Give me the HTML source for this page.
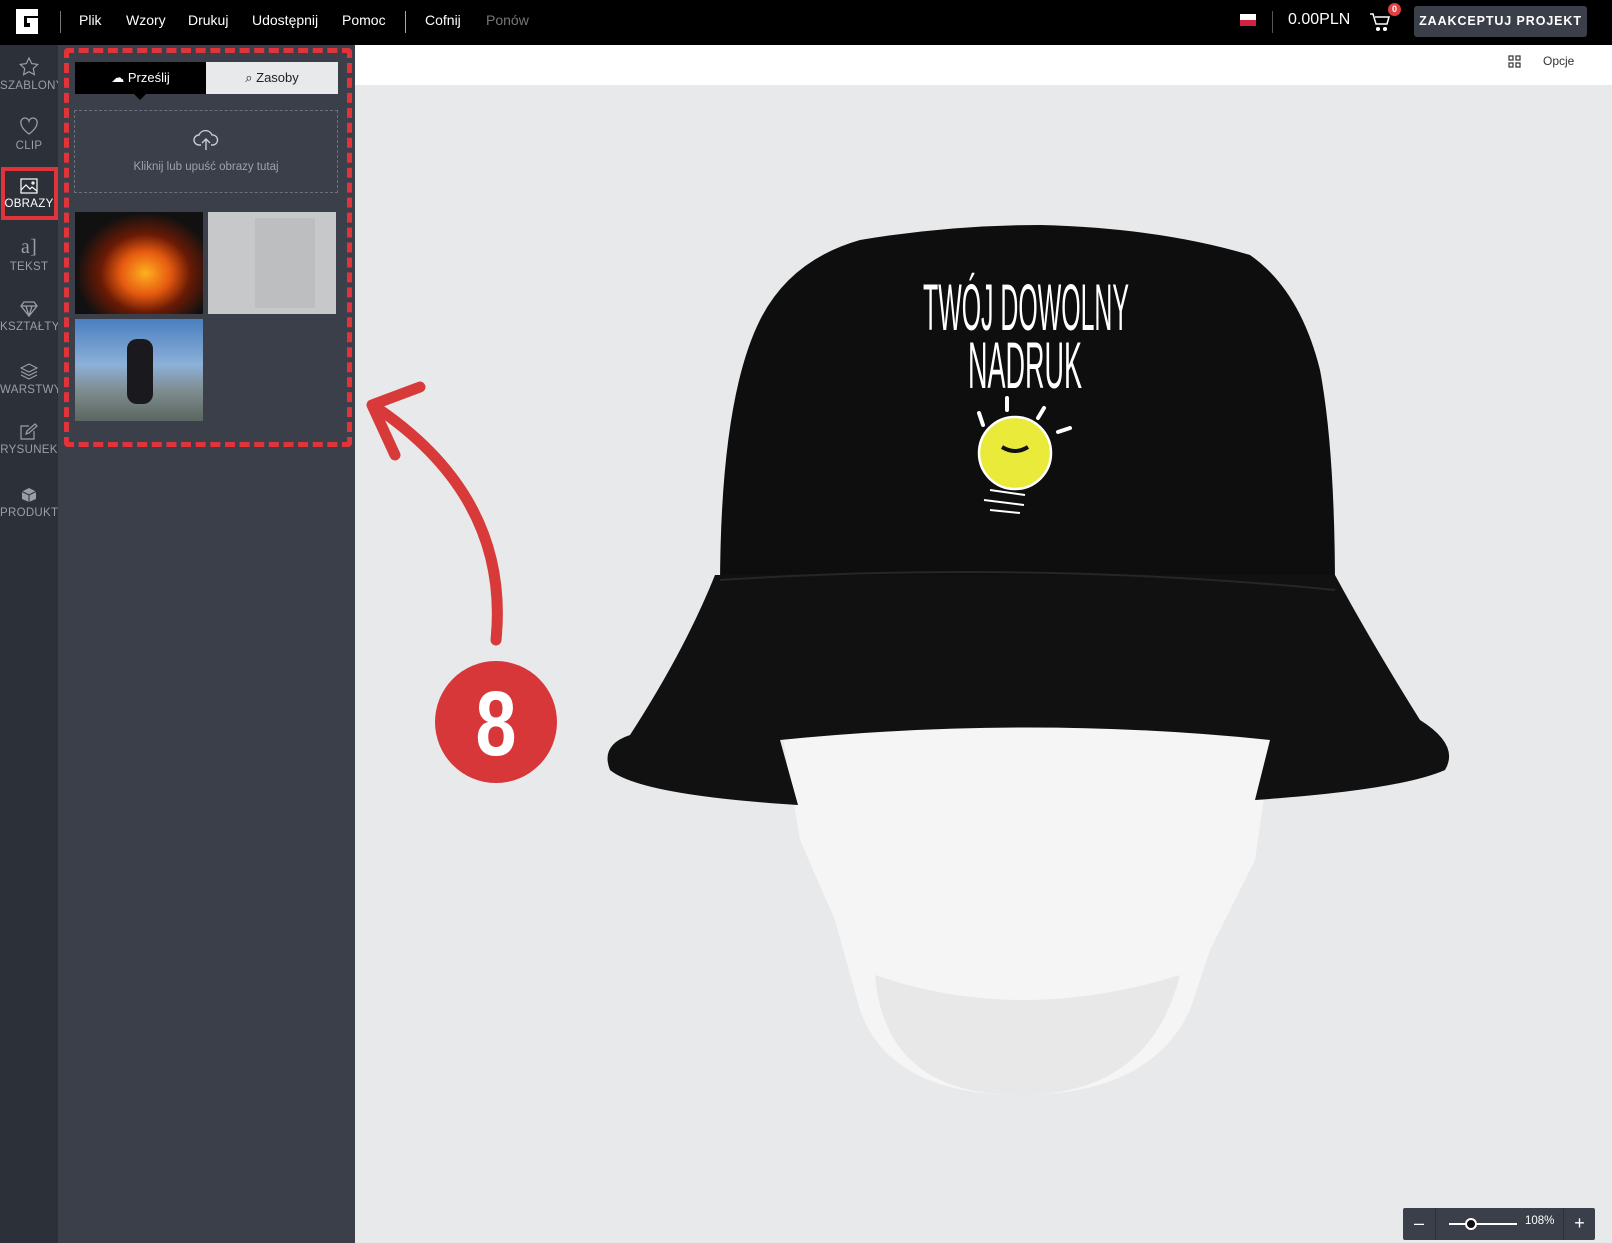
<!DOCTYPE html>
<html><head><meta charset="utf-8"><style>
*{margin:0;padding:0;box-sizing:border-box}
body{width:1612px;height:1243px;overflow:hidden;background:#e8e9eb;font-family:"Liberation Sans",sans-serif;position:relative}
.abs{position:absolute}
#top{left:0;top:0;width:1612px;height:45px;background:#000;color:#fff}
#top .m{position:absolute;top:12px;font-size:14px}
#side{left:0;top:45px;width:58px;height:1198px;background:#2c3038}
#panel{left:58px;top:45px;width:297px;height:1198px;background:#3a3f4a}
.si{position:absolute;left:0;width:58px;text-align:center;color:#9a9ea6;font-size:11.5px;letter-spacing:.3px;white-space:nowrap;overflow:hidden}
.si svg{display:block;margin:0 auto 4px}
</style></head><body>
<div id="top" class="abs">
  <svg class="abs" style="left:14px;top:9px" width="24" height="25" viewBox="0 0 24 25"><path d="M2 0h22v7H10v11h6v-4h-3V9h11v16H2z" fill="#fff"/></svg>
  <div class="abs" style="left:60px;top:11px;width:1px;height:22px;background:#777"></div>
  <span class="m" style="left:79px">Plik</span>
  <span class="m" style="left:126px">Wzory</span>
  <span class="m" style="left:188px">Drukuj</span>
  <span class="m" style="left:252px">Udostępnij</span>
  <span class="m" style="left:342px">Pomoc</span>
  <div class="abs" style="left:405px;top:11px;width:1px;height:22px;background:#aaa"></div>
  <span class="m" style="left:425px">Cofnij</span>
  <span class="m" style="left:486px;color:#777">Ponów</span>
  <div class="abs" style="left:1240px;top:14px;width:16px;height:6px;background:#fff"></div>
  <div class="abs" style="left:1240px;top:20px;width:16px;height:6px;background:#d4213d"></div>
  <div class="abs" style="left:1272px;top:11px;width:1px;height:22px;background:#555"></div>
  <span class="m" style="left:1288px;font-size:16px;top:11px">0.00PLN</span>
  <svg class="abs" style="left:1369px;top:12px" width="22" height="20" viewBox="0 0 22 20" fill="none" stroke="#fff" stroke-width="1.5"><path d="M1 2h3l3 10h11l2-7H6"/><circle cx="9" cy="17" r="1.3" fill="#fff"/><circle cx="16" cy="17" r="1.3" fill="#fff"/></svg>
  <div class="abs" style="left:1388px;top:3px;width:13px;height:13px;border-radius:50%;background:#e04040;color:#fff;font-size:9px;text-align:center;line-height:13px;font-weight:bold">0</div>
  <div class="abs" style="left:1414px;top:6px;width:173px;height:31px;background:#3a3f4a;border-radius:3px;color:#fff;font-weight:bold;font-size:12.5px;letter-spacing:.9px;text-align:center;line-height:31px">ZAAKCEPTUJ PROJEKT</div>
</div>
<div id="side" class="abs">
  <div class="si" style="top:12px"><svg width="20" height="19" viewBox="0 0 20 19" fill="none" stroke="#9a9ea6" stroke-width="1.2"><path d="M10 1l2.7 5.6 6 .8-4.4 4.2 1.1 6L10 14.7l-5.4 2.9 1.1-6L1.3 7.4l6-.8z"/></svg>SZABLONY</div>
  <div class="si" style="top:72px"><svg width="20" height="19" viewBox="0 0 20 19" fill="none" stroke="#9a9ea6" stroke-width="1.3"><path d="M10 17S2 11.5 2 6.3A4 4 0 0 1 10 4a4 4 0 0 1 8 2.3C18 11.5 10 17 10 17z"/></svg>CLIP</div>
  <div class="abs" style="left:1px;top:122px;width:57px;height:53px;border:4px solid #e0333a;background:#2c3038"></div>
  <div class="si" style="top:133px;color:#fff"><svg width="18" height="16" viewBox="0 0 18 16" fill="none" stroke="#fff" stroke-width="1.2"><rect x="1" y="1" width="16" height="14"/><path d="M1 12l5-5 4 4 2-2 5 4"/><circle cx="13" cy="5" r="1"/></svg>OBRAZY</div>
  <div class="si" style="top:192px"><div style="font-family:'Liberation Serif',serif;font-size:20px;height:24px;line-height:20px">a]</div>TEKST</div>
  <div class="si" style="top:256px"><svg width="18" height="16" viewBox="0 0 18 16" fill="none" stroke="#9a9ea6" stroke-width="1.3"><path d="M4 1h10l3 4-8 10L1 5zM1 5h16M6 5l3 10 3-10"/></svg>KSZTAŁTY</div>
  <div class="si" style="top:318px"><svg width="18" height="17" viewBox="0 0 18 17" fill="none" stroke="#9a9ea6" stroke-width="1.2"><path d="M9 1l8 4-8 4-8-4zM1 8.5l8 4 8-4M1 12l8 4 8-4"/></svg>WARSTWY</div>
  <div class="si" style="top:378px"><svg width="18" height="17" viewBox="0 0 18 17" fill="none" stroke="#9a9ea6" stroke-width="1.2"><path d="M9 3H1v13h13V8M6 11l1-3 8-7 2 2-8 7z"/></svg>RYSUNEK</div>
  <div class="si" style="top:442px"><svg width="16" height="16" viewBox="0 0 16 16"><path d="M8 1l7 3.5v7.5L8 15 1 12V4.5z" fill="#9a9ea6"/><path d="M1 4.5L8 8l7-3.5M8 8v7" stroke="#2c3038" stroke-width="1" fill="none"/></svg>PRODUKT</div>
</div>
<div id="panel" class="abs"></div>
<div class="abs" style="left:75px;top:62px;width:131px;height:32px;background:#000;color:#fff;font-size:13px;text-align:center;line-height:32px">☁ Prześlij</div>
<div class="abs" style="left:134px;top:94px;width:0;height:0;border-left:6px solid transparent;border-right:6px solid transparent;border-top:6px solid #000"></div>
<div class="abs" style="left:206px;top:62px;width:132px;height:32px;background:#e8e9eb;color:#222;font-size:13px;text-align:center;line-height:32px">⌕ Zasoby</div>
<div class="abs" style="left:74px;top:110px;width:264px;height:83px;border:1px dashed #6a707c"></div>
<svg class="abs" style="left:193px;top:128px" width="26" height="24" viewBox="0 0 26 24" fill="none" stroke="#c8ccd2" stroke-width="1.4"><path d="M8 17H6a5 5 0 0 1 0-10 7 7 0 0 1 13 0 5 5 0 0 1 1 10h-2M13 22V11M9 15l4-4 4 4"/></svg>
<div class="abs" style="left:74px;top:161px;width:264px;text-align:center;color:#9da1a9;font-size:11.5px">Kliknij lub upuść obrazy tutaj</div>
<div class="abs" style="left:75px;top:212px;width:128px;height:102px;background:radial-gradient(ellipse at 55% 60%,#ffb020 0,#e65a10 25%,#6a1a05 45%,#111 70%)"></div>
<div class="abs" style="left:208px;top:212px;width:128px;height:102px;background:#c7c8ca"><div style="position:absolute;left:47px;top:6px;width:60px;height:90px;background:#bdbec0"></div></div>
<div class="abs" style="left:75px;top:319px;width:128px;height:102px;background:linear-gradient(#4a7fc0 0,#8cb0d8 45%,#7f8d90 70%,#5a6660 100%)"><div style="position:absolute;left:52px;top:20px;width:26px;height:65px;background:#1a1a1e;border-radius:10px"></div></div>
<div class="abs" style="left:64px;top:48px;width:288px;height:399px;border:5px dashed #e0333a;border-radius:4px"></div>
<div class="abs" style="left:355px;top:45px;width:1257px;height:40px;background:#fff"></div>
<svg class="abs" style="left:1508px;top:55px" width="13" height="13" viewBox="0 0 13 13" fill="none" stroke="#333" stroke-width="1.2"><rect x="1" y="1" width="4" height="4"/><rect x="8" y="1" width="4" height="4"/><rect x="1" y="8" width="4" height="4"/><path d="M8 8h4v4H8z"/></svg>
<div class="abs" style="left:1543px;top:54px;font-size:12px;color:#333">Opcje</div>
<svg class="abs" style="left:355px;top:85px" width="1257" height="1158" viewBox="355 85 1257 1158">
  <path d="M780 720 L1275 720 L1255 860 L1210 950 L1190 1010 Q1150 1095 1020 1095 Q890 1095 860 1010 L835 920 L800 840 Z" fill="#f5f5f5"/>
  <path d="M875 975 Q1020 1025 1180 975 Q1150 1095 1020 1095 Q885 1095 875 975Z" fill="#e8e8e8"/>
  <path d="M720 590 Q720 400 760 320 Q790 260 860 240 Q950 225 1040 225 Q1160 228 1250 255 Q1300 290 1320 370 Q1335 450 1335 590 Z" fill="#0e0e0e"/>
  <path d="M715 575 L1335 575 Q1370 640 1420 720 Q1460 745 1445 770 Q1400 790 1255 800 L1270 740 Q1030 715 780 740 L798 805 Q640 795 610 770 Q600 745 630 735 Q685 650 715 575Z" fill="#111"/>
  <path d="M720 580 Q1030 560 1335 590" stroke="#262626" stroke-width="2" fill="none"/>
  <g fill="none" stroke="#fff" stroke-width="3.5">
    <circle cx="1015" cy="453" r="36" fill="#e9ea3a" stroke="#fff" stroke-width="2.5"/>
    <path d="M1002 447 q13 8 26 0" stroke="#111" stroke-width="4"/>
    <path d="M990 490 l35 5 M984 500 l40 5 M990 510 l30 3" stroke-width="2"/>
    <path d="M983 425 l-4 -12 M1007 410 l0 -12 M1038 418 l6 -10 M1058 432 l12 -4" stroke-width="4" stroke-linecap="round"/>
  </g>
  <text x="923" y="330" fill="#fff" font-family="Liberation Sans,sans-serif" font-size="66" textLength="206" lengthAdjust="spacingAndGlyphs">TWÓJ DOWOLNY</text>
  <text x="968" y="388" fill="#fff" font-family="Liberation Sans,sans-serif" font-size="66" textLength="114" lengthAdjust="spacingAndGlyphs">NADRUK</text>
  <path d="M496 640 Q510 500 380 410" stroke="#d83a3a" stroke-width="11" fill="none" stroke-linecap="round"/>
  <path d="M372 405 L420 387 M372 405 L395 455" stroke="#d83a3a" stroke-width="11" fill="none" stroke-linecap="round"/>
  <circle cx="496" cy="722" r="61" fill="#d8373a"/>
  <text x="496" y="755" text-anchor="middle" fill="#fff" font-family="Liberation Sans" font-weight="bold" font-size="92" transform="translate(496 0) scale(0.8 1) translate(-496 0)">8</text>
</svg>
<div class="abs" style="left:1403px;top:1208px;width:192px;height:32px;background:#3a3f4a;border-radius:2px;color:#fff">
  <div class="abs" style="left:0;top:0;width:33px;height:32px;text-align:center;line-height:30px;font-size:18px;border-right:1px solid #2c3038">–</div>
  <div class="abs" style="left:46px;top:15px;width:68px;height:2px;background:#fff"></div>
  <div class="abs" style="left:62px;top:10px;width:12px;height:12px;border-radius:50%;background:#111;border:2px solid #fff"></div>
  <div class="abs" style="left:122px;top:7px;font-size:11.5px">108%</div>
  <div class="abs" style="left:160px;top:0;width:32px;height:32px;text-align:center;line-height:30px;font-size:18px;border-left:1px solid #2c3038">+</div>
</div>
</body></html>
